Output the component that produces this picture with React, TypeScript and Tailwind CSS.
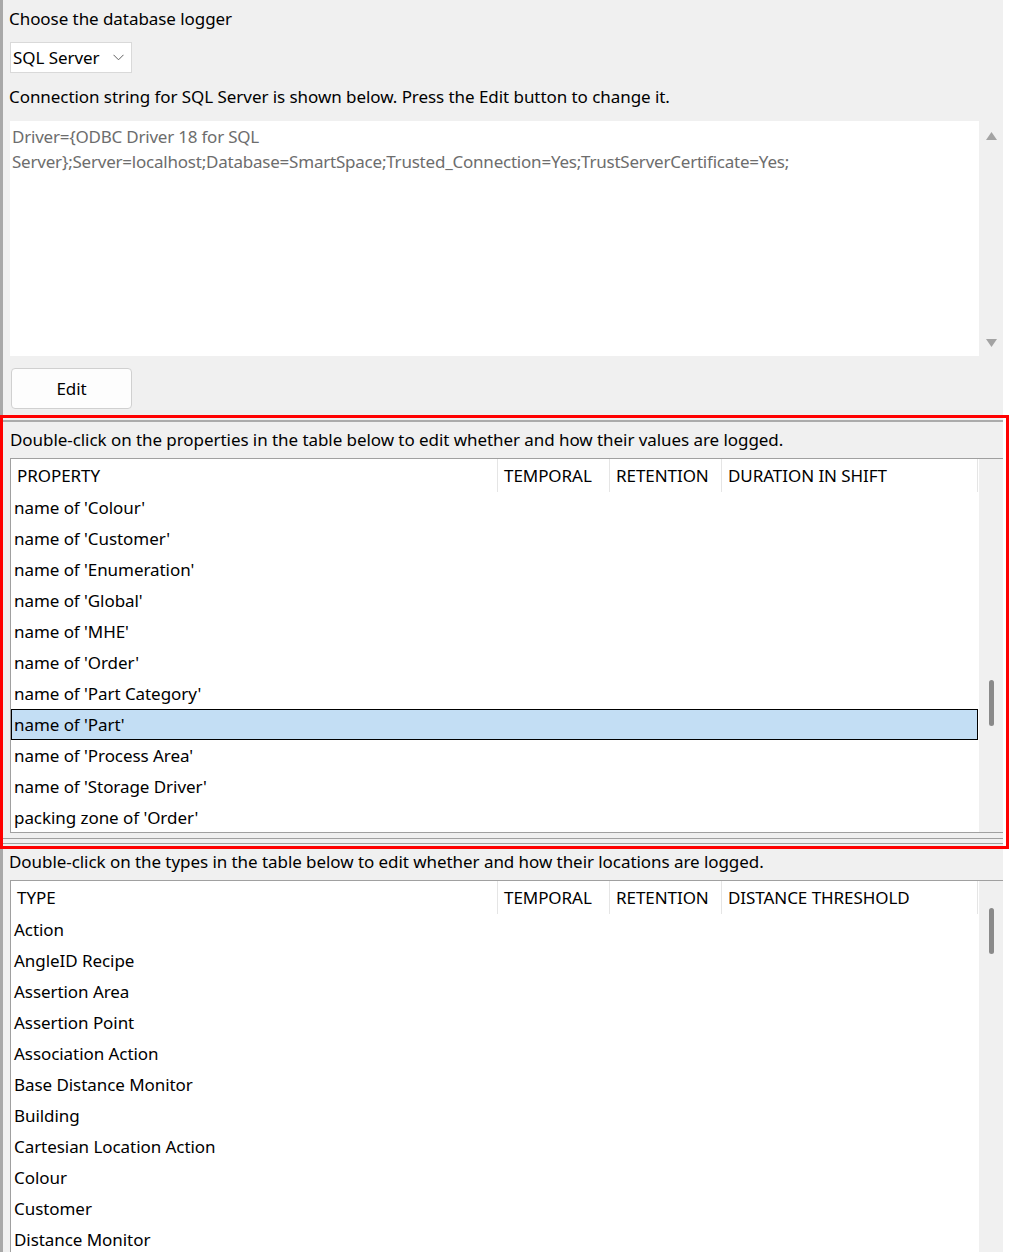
import React from 'react';

const propertyRows = [
  "name of 'Colour'",
  "name of 'Customer'",
  "name of 'Enumeration'",
  "name of 'Global'",
  "name of 'MHE'",
  "name of 'Order'",
  "name of 'Part Category'",
  "name of 'Part'",
  "name of 'Process Area'",
  "name of 'Storage Driver'",
  "packing zone of 'Order'",
];

const typeRows = [
  'Action',
  'AngleID Recipe',
  'Assertion Area',
  'Assertion Point',
  'Association Action',
  'Base Distance Monitor',
  'Building',
  'Cartesian Location Action',
  'Colour',
  'Customer',
  'Distance Monitor',
  'Enumeration',
];

interface GridProps {
  firstHeader: string;
  lastHeader: string;
  rows: string[];
  selected?: number;
  thumbTop: string;
  className: string;
}

const Grid: React.FC<GridProps> = ({ firstHeader, lastHeader, rows, selected, thumbTop, className }) => {
  return (
    <div className={`ml-[7px] flex bg-white border-l border-t border-[#a0a0a0] overflow-hidden ${className}`}>
      <div className="w-[968px] flex flex-col shrink-0">
        <div className="h-[33px] flex shrink-0">
          <div className="w-[487px] h-full border-r border-[#e5e5e5] flex items-center pl-[6px]">{firstHeader}</div>
          <div className="w-[112px] h-full border-r border-[#e5e5e5] flex items-center pl-[6px]">TEMPORAL</div>
          <div className="w-[112px] h-full border-r border-[#e5e5e5] flex items-center pl-[6px]">RETENTION</div>
          <div className="w-[256px] h-full border-r border-[#e5e5e5] flex items-center pl-[6px]">{lastHeader}</div>
        </div>
        {rows.map((row, i) =>
          i === selected ? (
            <div key={row} className="h-[31px] shrink-0 mr-[1px] flex items-center pl-[2px] bg-[#c3def4] border border-black">
              {row}
            </div>
          ) : (
            <div key={row} className="h-[31px] shrink-0 flex items-center pl-[3px]">
              {row}
            </div>
          )
        )}
      </div>
      <div className="w-[24px] bg-[#f0f0f0] shrink-0 flex flex-col items-start pl-[10px]">
        <div className={`w-[5px] h-[46px] rounded-full bg-[#8a8a8a] ${thumbTop}`} />
      </div>
    </div>
  );
};

const App: React.FC = () => {
  return (
    <div className="w-[1011px] h-[1252px] bg-white overflow-hidden font-['Noto_Sans',sans-serif] text-[17px] tracking-[-0.06px] text-black">
      <div className="w-[1003px] h-full bg-[#f0f0f0] border-l-[3px] border-[#a8a8a8] flex flex-col">
        <div className="h-[38px] flex items-center pl-[6px] shrink-0">Choose the database logger</div>

        <div className="pl-[7px] mt-[4px] shrink-0">
          <div className="w-[122px] h-[31px] bg-white border border-[#d9d9d9] flex items-center justify-between pl-[2px] pr-[7px]">
            <span>SQL Server</span>
            <svg width="11" height="7" viewBox="0 0 11 7" fill="none">
              <path d="M0.5 0.8 L5.5 5.8 L10.5 0.8" stroke="#5f5f5f" strokeWidth="1" />
            </svg>
          </div>
        </div>

        <div className="h-[48px] flex items-center pl-[6px] shrink-0">
          Connection string for SQL Server is shown below. Press the Edit button to change it.
        </div>

        <div className="ml-[7px] h-[235px] flex bg-white shrink-0">
          <div className="flex-1 pl-[2px] pt-[3px] leading-[25px] tracking-[-0.22px] text-[#6d6d6d]">
            Driver={'{'}ODBC Driver 18 for SQL Server{'}'};Server=localhost;Database=SmartSpace;Trusted_Connection=Yes;TrustServerCertificate=Yes;
          </div>
          <div className="w-[24px] bg-[#f0f0f0] flex flex-col items-center justify-between pt-[11px] pb-[9px]">
            <svg width="11" height="8" viewBox="0 0 11 8">
              <path d="M5.5 0 L11 8 L0 8 Z" fill="#a3a3a3" />
            </svg>
            <svg width="11" height="8" viewBox="0 0 11 8">
              <path d="M0 0 L11 0 L5.5 8 Z" fill="#a3a3a3" />
            </svg>
          </div>
        </div>

        <div className="ml-[8px] mt-[12px] w-[121px] h-[41px] shrink-0 rounded-[4px] border border-[#d0d0d0] bg-[#fdfdfd] flex items-center justify-center">
          Edit
        </div>

        <div className="relative mt-[6px] h-[434px] shrink-0 flex flex-col">
          <div className="mt-[5px] h-[2px] bg-[#ababab] shrink-0" />
          <div className="h-[36px] flex items-center pl-[7px] shrink-0">
            Double-click on the properties in the table below to edit whether and how their values are logged.
          </div>
          <Grid
            firstHeader="PROPERTY"
            lastHeader="DURATION IN SHIFT"
            rows={propertyRows}
            selected={7}
            thumbTop="mt-[221px]"
            className="h-[375px] border-b shrink-0"
          />
          <div className="mt-[5px] h-[1px] bg-[#a0a0a0] shrink-0" />
          <div className="mt-[4px] h-[1px] bg-[#a0a0a0] shrink-0" />
          <div className="absolute -left-[3px] top-0 w-[1009px] h-[434px] border-[3px] border-[#ff0000] pointer-events-none" />
        </div>

        <div className="h-[26px] flex items-center pl-[6px] shrink-0">
          Double-click on the types in the table below to edit whether and how their locations are logged.
        </div>
        <Grid
          firstHeader="TYPE"
          lastHeader="DISTANCE THRESHOLD"
          rows={typeRows}
          thumbTop="mt-[27px]"
          className="mt-[5px] flex-1"
        />
      </div>
    </div>
  );
};

export default App;
